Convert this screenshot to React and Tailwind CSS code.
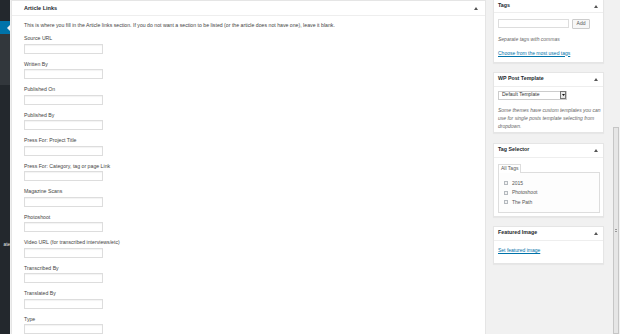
import React from "react";

const fields = [
  "Source URL",
  "Written By",
  "Published On",
  "Published By",
  "Press For: Project Title",
  "Press For: Category, tag or page Link",
  "Magazine Scans",
  "Photoshoot",
  "Video URL (for transcribed interviews/etc)",
  "Transcribed By",
  "Translated By",
  "Type",
];

function Caret() {
  return (
    <svg width="4" height="3" viewBox="0 0 4 3" className="shrink-0">
      <polygon points="2,0 4,3 0,3" fill="#555" />
    </svg>
  );
}

function SideBox({ title, headH, children, className = "" }) {
  return (
    <div className={`bg-white border border-[#e5e5e5] shadow-[0_1px_1px_rgba(0,0,0,0.04)] ${className}`}>
      <div
        className={`flex items-center justify-between pl-[4px] pr-[5px] border-b border-[#eeeeee] ${headH}`}
      >
        <span className="text-[5.3px] font-bold text-[#23282d]">{title}</span>
        <Caret />
      </div>
      <div className="px-[4px]">{children}</div>
    </div>
  );
}

export default function App() {
  return (
    <div
      className="w-[620px] h-[334px] overflow-hidden bg-[#f1f1f1] flex"
      style={{ fontFamily: '"Liberation Sans", Arial, sans-serif' }}
    >
      {/* admin menu */}
      <div className="w-[10px] shrink-0 bg-[#23282d] flex flex-col">
        <div className="h-[21px]" />
        <div className="h-[13px] bg-[#0073aa] relative">
          <div className="absolute right-0 top-[4px] w-0 h-0 border-y-[3px] border-y-transparent border-r-[3px] border-r-[#f1f1f1]" />
        </div>
        <div className="h-[51px] bg-[#32373c]" />
        <div className="mt-[157px] flex justify-end">
          <span className="text-[4.6px] leading-[6px] text-[#eeeeee] whitespace-nowrap">ate</span>
        </div>
      </div>

      {/* main postbox */}
      <div className="ml-[1px] w-[475px] shrink-0 self-start bg-white border border-[#e5e5e5] border-b-0 h-[340px]">
        <div className="h-[15px] flex items-center justify-between pl-[12px] pr-[7px] border-b border-[#eeeeee]">
          <span className="text-[5.5px] font-bold text-[#23282d]">Article Links</span>
          <Caret />
        </div>
        <div className="pl-[12px] pt-[6px]">
          <p className="text-[5.2px] leading-[7px] text-[#444] whitespace-nowrap">
            This is where you fill in the Article links section. If you do not want a section to be listed (or the article does not have one), leave it blank.
          </p>
          <div className="mt-[6px] flex flex-col">
            {fields.map((f) => (
              <div key={f} className="mb-[7px]">
                <div className="text-[5.2px] leading-[7px] h-[7px] text-[#444] whitespace-nowrap">{f}</div>
                <div className="mt-[1.5px] w-[79px] h-[10px] border border-[#dddddd] shadow-[inset_0_1px_1px_rgba(0,0,0,0.05)] bg-white" />
              </div>
            ))}
          </div>
        </div>
      </div>

      {/* sidebar */}
      <div className="ml-[7px] w-[111px] shrink-0 flex flex-col">
        <SideBox title="Tags" headH="h-[13px]" className="border-t-0">
          <div className="pt-[6px] flex items-start">
            <div className="w-[71px] h-[9px] border border-[#dddddd] bg-white" />
            <div className="ml-[3px] w-[18px] h-[10px] border border-[#cccccc] bg-[#f7f7f7] rounded-[1px] flex items-center justify-center text-[5px] text-[#555]">
              Add
            </div>
          </div>
          <p className="mt-[6.5px] text-[5px] leading-[7px] italic text-[#666]">Separate tags with commas</p>
          <p className="mt-[7px] text-[5px] leading-[7px] text-[#0073aa] underline">Choose from the most used tags</p>
          <div className="h-[5px]" />
        </SideBox>

        <SideBox title="WP Post Template" headH="h-[14px]" className="mt-[9px]">
          <div className="mt-[4px] w-[69px] h-[9px] border border-[#cccccc] bg-white flex items-center">
            <span className="flex-1 pl-[3px] text-[5px] text-[#333] whitespace-nowrap">Default Template</span>
            <div className="w-[6px] h-[8px] border border-[#777] bg-[#e9e9e9] flex items-center justify-center">
              <svg width="3" height="2" viewBox="0 0 3 2">
                <polygon points="0,0 3,0 1.5,2" fill="#111" />
              </svg>
            </div>
          </div>
          <p className="mt-[6px] text-[5px] leading-[8px] italic text-[#666] whitespace-nowrap">
            Some themes have custom templates you can
            <br />
            use for single posts template selecting from
            <br />
            dropdown.
          </p>
          <div className="h-[2px]" />
        </SideBox>

        <SideBox title="Tag Selector" headH="h-[14px]" className="mt-[10px]">
          <div className="mt-[5px] flex">
            <div className="border border-b-0 border-[#dddddd] bg-white h-[9px] px-[2px] flex items-center text-[5px] text-[#555] relative top-[1px]">
              All Tags
            </div>
          </div>
          <div className="w-[102px] h-[41px] border border-[#dddddd] bg-[#fdfdfd] pt-[6px] pl-[5px]">
            {["2015", "Photoshoot", "The Path"].map((t) => (
              <div key={t} className="h-[9.5px] flex items-center">
                <div className="w-[4px] h-[4px] border border-[#b4b9be] bg-[#f3f3f3]" />
                <span className="ml-[4px] text-[5px] text-[#555]">{t}</span>
              </div>
            ))}
          </div>
          <div className="h-[3px]" />
        </SideBox>

        <SideBox title="Featured Image" headH="h-[14px]" className="mt-[9px]">
          <p className="mt-[6.5px] text-[5px] leading-[7px] text-[#0073aa] underline">Set featured image</p>
          <div className="h-[9px]" />
        </SideBox>
      </div>

      {/* scrollbar */}
      <div className="ml-[9px] w-[6px] flex flex-col">
        <div className="h-[127px]" />
        <div className="flex-1 bg-[#e6e6e6] border border-[#c6c6c6] flex items-center justify-center">
          <div className="w-[2px] h-[3px] border-y border-[#999]" />
        </div>
      </div>
    </div>
  );
}
